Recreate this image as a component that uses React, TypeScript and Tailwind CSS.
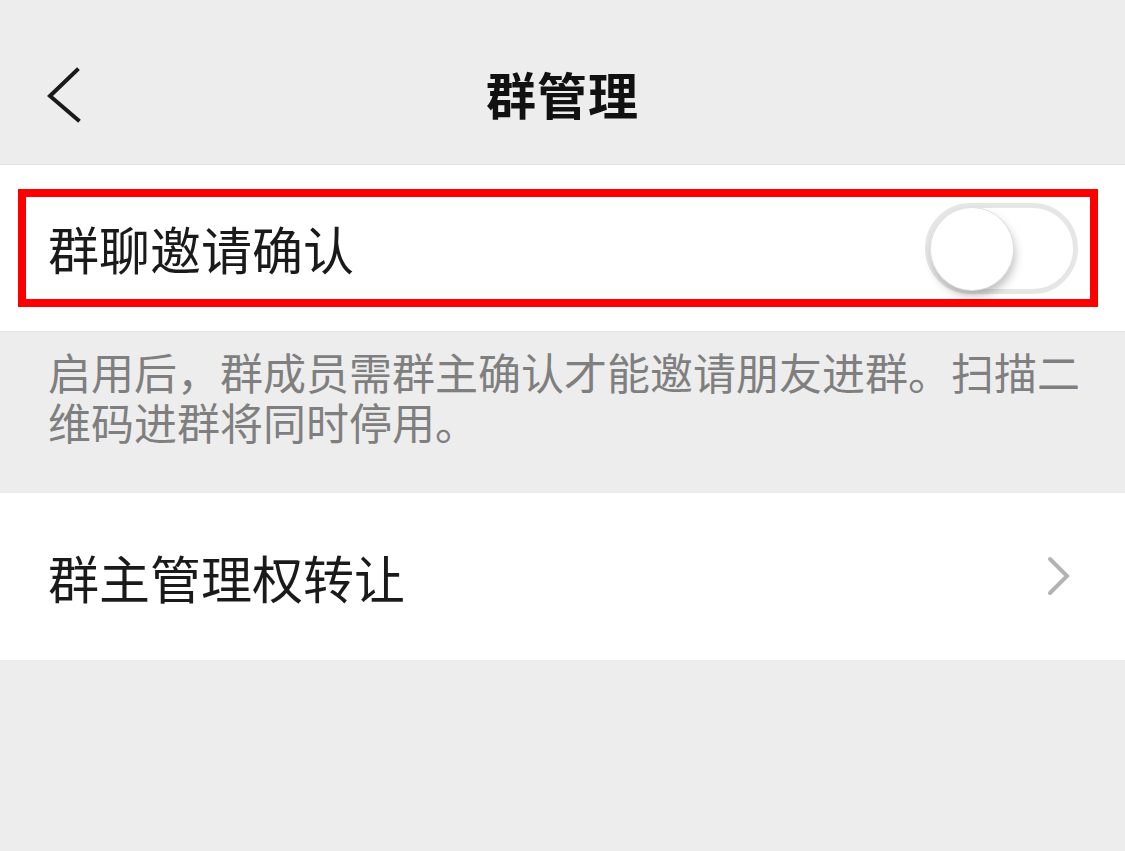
const font = { fontFamily: '"Noto Sans CJK SC", "Noto Sans", sans-serif' };

function BackIcon() {
  return (
    <svg width="40" height="60" viewBox="0 0 40 60" fill="none" className="absolute left-[44px] top-[65px]">
      <polyline points="33,5 6,31 34,55" stroke="#1a1a1a" strokeWidth="4" strokeLinecap="square" strokeLinejoin="miter" />
    </svg>
  );
}

function ArrowIcon() {
  return (
    <svg width="30" height="46" viewBox="0 0 30 46" fill="none">
      <polyline points="5,4 22,21 5,38" stroke="#b3b3b3" strokeWidth="4" strokeLinecap="round" strokeLinejoin="miter" />
    </svg>
  );
}

function Toggle() {
  return (
    <div className="relative h-[91px] w-[153px] rounded-full border-[5px] border-[#e6e6e6] bg-white">
      <div className="absolute left-[1px] top-0 h-[82px] w-[82px] rounded-full bg-white shadow-[2px_6px_10px_rgba(0,0,0,0.25)] ring-1 ring-[#e0e0e0]" />
    </div>
  );
}

export default function App() {
  return (
    <div className="flex min-h-[851px] w-[1125px] flex-col bg-[#ededed]" style={font}>
      <div className="relative flex h-[165px] items-center justify-center border-b border-[#e3e3e3] bg-[#ededed] pt-[22px]">
        <BackIcon />
        <h1 className="text-[50px] font-bold leading-none tracking-[1px] text-[#111]">群管理</h1>
      </div>

      <div className="flex h-[166px] bg-white pl-[18px] pr-[27px] pt-[24px]">
        <div className="flex h-[118px] w-full items-center justify-between border-[8px] border-[#ff0000] pl-[22px] pr-[12px]">
          <span className="text-[51px] leading-none text-[#1a1a1a]">群聊邀请确认</span>
          <Toggle />
        </div>
      </div>

      <div className="h-[162px] border-t border-[#e6e6e6] pl-[48px] pr-[40px] pt-[14px] text-[43px] leading-[50px] text-[#7f7f7f]">
        启用后，群成员需群主确认才能邀请朋友进群。扫描二维码进群将同时停用。
      </div>

      <div className="flex h-[167px] items-center justify-between bg-white pl-[48px] pr-[50px] pt-[2px]">
        <span className="text-[51px] leading-none text-[#1a1a1a]">群主管理权转让</span>
        <ArrowIcon />
      </div>

      <div className="flex-1 bg-[#ededed]" />
    </div>
  );
}
